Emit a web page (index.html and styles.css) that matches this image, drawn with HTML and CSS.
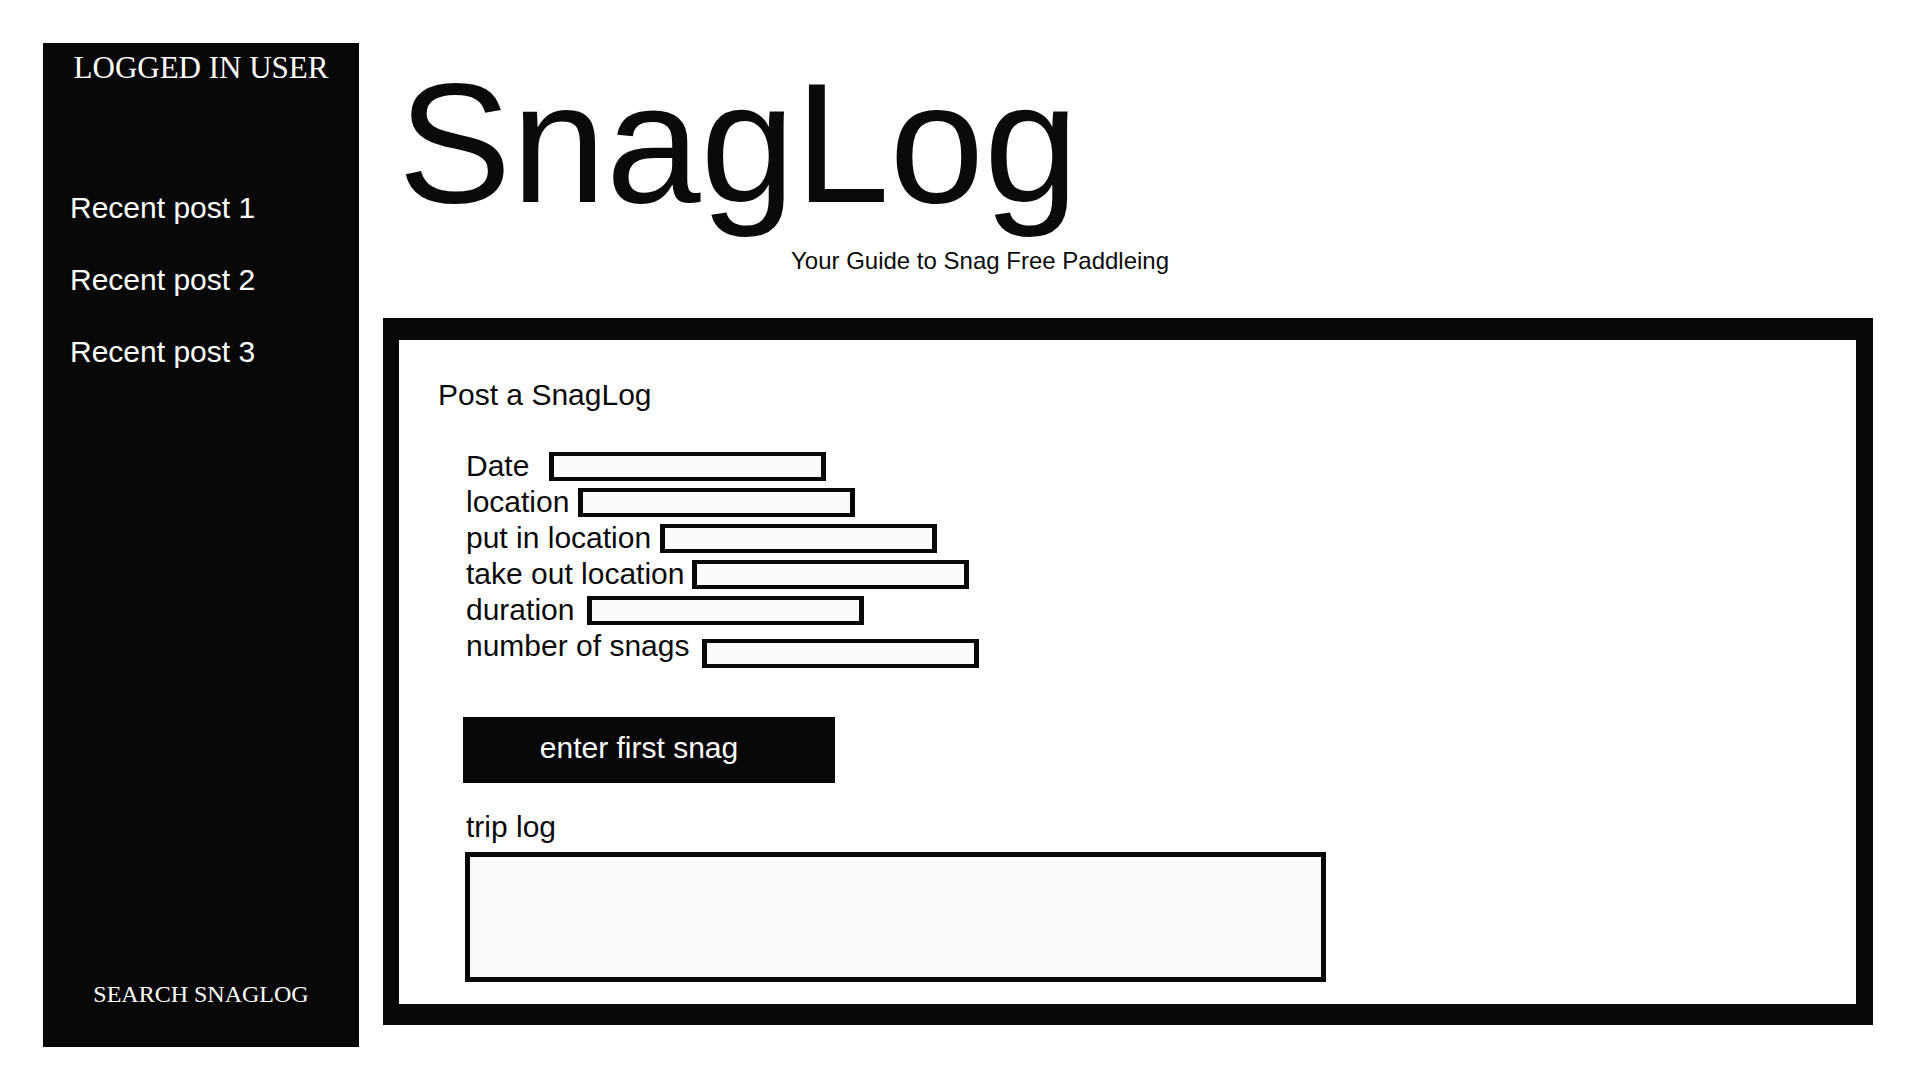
FILE: index.html
```html
<!DOCTYPE html>
<html lang="en">
<head>
<meta charset="utf-8">
<title>SnagLog</title>
<link rel="stylesheet" href="styles.css">
</head>
<body>
<div class="page">
  <aside class="sidebar">
    <div class="user">Logged in user</div>
    <ul class="recent">
      <li>Recent post 1</li>
      <li>Recent post 2</li>
      <li>Recent post 3</li>
    </ul>
    <div class="search">Search SnagLog</div>
  </aside>
  <main class="main">
    <header class="header">
      <h1 class="title">SnagLog</h1>
      <p class="tagline">Your Guide to Snag Free Paddleing</p>
    </header>
    <section class="panel">
      <h2 class="panel-title">Post a SnagLog</h2>
      <form class="form">
        <div class="fields">
          <label class="row gap-wide"><span>Date</span><input class="field" type="text"></label>
          <label class="row"><span>location</span><input class="field" type="text"></label>
          <label class="row"><span>put in location</span><input class="field" type="text"></label>
          <label class="row gap-tight"><span>take out location</span><input class="field" type="text"></label>
          <label class="row gap-mid"><span>duration</span><input class="field" type="text"></label>
          <label class="row gap-mid low"><span>number of snags</span><input class="field" type="text"></label>
        </div>
        <button class="snag-btn" type="button">enter first snag</button>
        <label class="log-label" for="triplog">trip log</label>
        <textarea class="log" id="triplog"></textarea>
      </form>
    </section>
  </main>
</div>
</body>
</html>
```
FILE: styles.css
```css
* { box-sizing: border-box; }

html, body {
  margin: 0;
  padding: 0;
  background: #ffffff;
}

body {
  font-family: "Liberation Sans", Arial, sans-serif;
  color: #0a0a0a;
}

.page {
  display: flex;
  align-items: flex-start;
  padding: 43px 0 0 43px;
  width: 1920px;
  height: 1080px;
}

/* Sidebar */
.sidebar {
  width: 316px;
  height: 1004px;
  background: #080808;
  color: #ffffff;
  display: flex;
  flex-direction: column;
  padding: 7px 0 38px 27px;
}

.user {
  font-family: "Liberation Serif", "Times New Roman", serif;
  text-transform: uppercase;
  font-size: 31px;
  line-height: 36px;
  text-align: center;
  margin-left: -27px;
}

.recent {
  list-style: none;
  margin: 104px 0 0 0;
  padding: 0;
  display: flex;
  flex-direction: column;
  gap: 36px;
}

.recent li {
  font-size: 30px;
  line-height: 36px;
}

.search {
  margin-top: auto;
  margin-left: -27px;
  font-family: "Liberation Serif", "Times New Roman", serif;
  text-transform: uppercase;
  font-size: 24px;
  line-height: 30px;
  text-align: center;
}

/* Main */
.main {
  margin-left: 24px;
  width: 1490px;
  display: flex;
  flex-direction: column;
}

.header {
  display: flex;
  flex-direction: column;
}

.title {
  margin: 14px 0 0 15px;
  font-size: 170px;
  line-height: 172px;
  font-weight: normal;
  letter-spacing: 0;
}

.tagline {
  margin: 18px 0 0 408px;
  font-size: 24px;
  line-height: 28px;
}

.panel {
  margin-top: 43px;
  width: 1490px;
  height: 707px;
  border-style: solid;
  border-color: #080808;
  border-width: 22px 17px 21px 16px;
  padding: 38px 0 0 39px;
}

.panel-title {
  margin: 0;
  font-size: 30px;
  line-height: 34px;
  font-weight: normal;
}

.form {
  display: flex;
  flex-direction: column;
  align-items: flex-start;
  margin: 36px 0 0 28px;
}

.fields {
  display: flex;
  flex-direction: column;
}

.row {
  display: flex;
  align-items: center;
  gap: 9px;
  height: 36px;
  font-size: 30px;
  line-height: 36px;
}

.row.gap-wide { gap: 20px; }
.row.gap-mid { gap: 13px; }
.row.gap-tight { gap: 8px; }

.field {
  width: 277px;
  height: 29px;
  margin: 0;
  padding: 0;
  border-style: solid;
  border-color: #080808;
  border-width: 4px 5px;
  background: #fafafa;
  outline: none;
}

.row.low .field { margin-top: 14px; }

.snag-btn {
  margin: 53px 0 0 -3px;
  width: 372px;
  height: 66px;
  border: none;
  background: #080808;
  color: #ffffff;
  font-family: "Liberation Sans", Arial, sans-serif;
  font-size: 30px;
  padding: 0 20px 4px 0;
  text-align: center;
}

.log-label {
  margin-top: 26px;
  font-size: 30px;
  line-height: 36px;
}

.log {
  margin: 7px 0 0 -1px;
  width: 861px;
  height: 130px;
  border-style: solid;
  border-color: #080808;
  border-width: 5px;
  background: #fafafa;
  resize: none;
  padding: 0;
  outline: none;
}
```
